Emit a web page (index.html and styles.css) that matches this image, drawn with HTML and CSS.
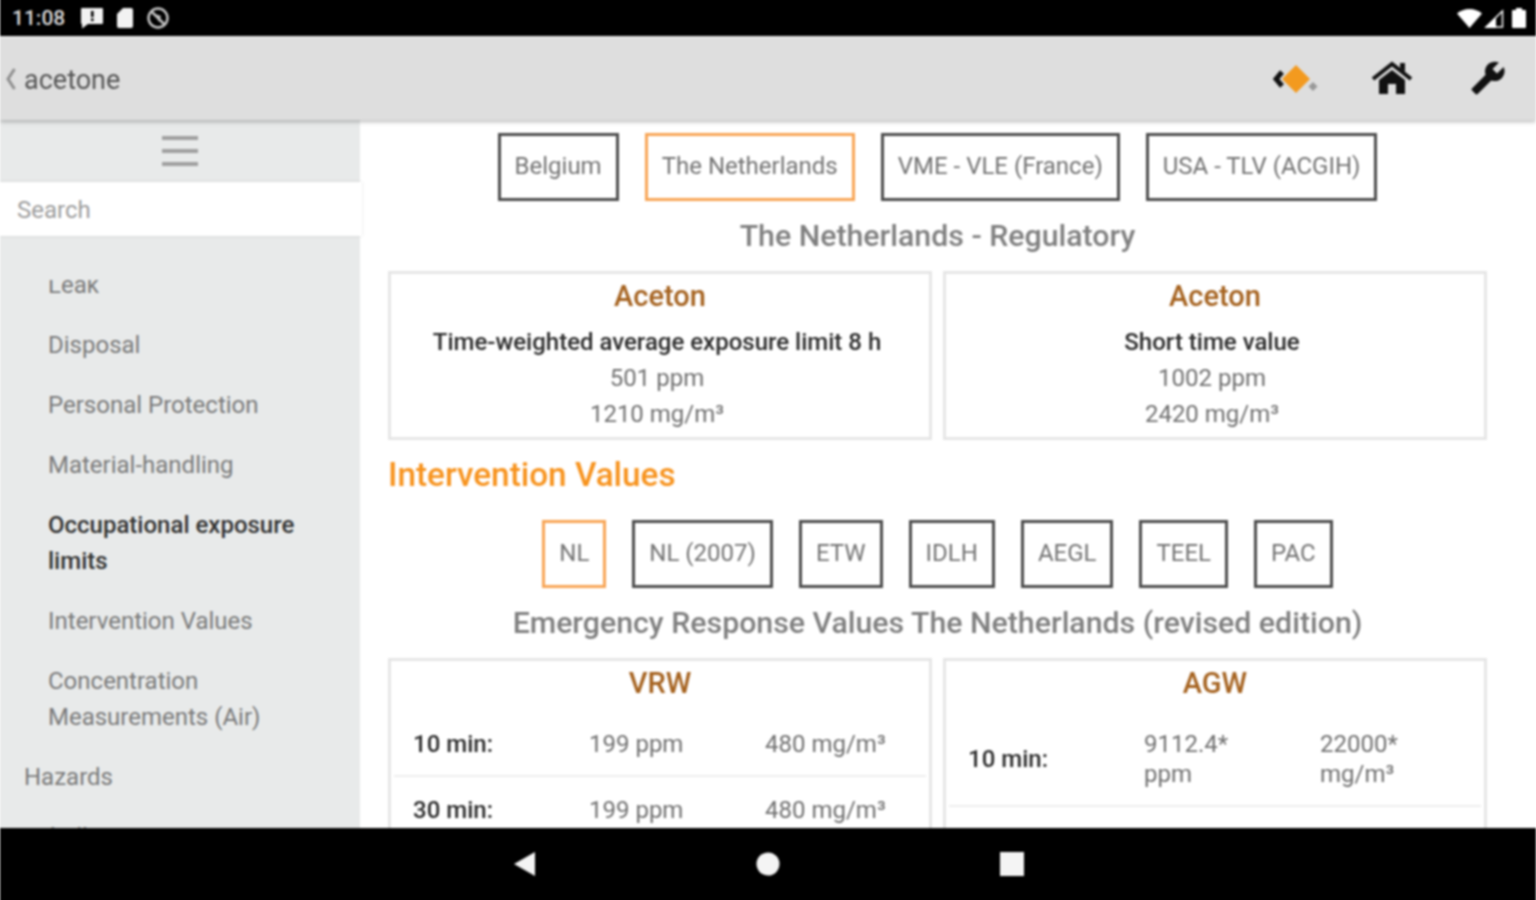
FILE: index.html
```html
<!DOCTYPE html>
<html lang="en">
<head>
    <meta charset="UTF-8">
    <meta name="viewport" content="width=device-width, initial-scale=1.0">
    <title>acetone</title>
    <link rel="stylesheet" href="styles.css">
</head>
<body>
    <div class="app">
        <div class="status-bar">
            <div class="status-left">
                <span class="time">11:08</span>
                <svg class="st-msg" width="24" height="22" viewBox="0 0 24 22"><path fill="#f2f2f2" d="M2 1h20a1 1 0 0 1 1 1v14a1 1 0 0 1-1 1H8l-6 4.500V17a1 1 0 0 1-1-1V2a1 1 0 0 1 1-1z"/><rect x="11" y="4" width="2.600" height="6" fill="#000"/><rect x="11" y="11.500" width="2.600" height="2.600" fill="#000"/></svg>
                <svg class="st-sd" width="16" height="20" viewBox="0 0 16 20"><path fill="#f2f2f2" d="M6 0h8a2 2 0 0 1 2 2v16a2 2 0 0 1-2 2H2a2 2 0 0 1-2-2V6z"/></svg>
                <svg class="st-sync" width="24" height="24" viewBox="0 0 24 24"><circle cx="12" cy="12" r="9.500" fill="none" stroke="#c4c4c4" stroke-width="2.500"/><path d="M5 5l14 14" stroke="#c4c4c4" stroke-width="2.500"/><path d="M9 8l6 2-2 6z" fill="#c4c4c4"/></svg>
            </div>
            <div class="status-right">
                <svg width="25" height="19" viewBox="0 0 25 19"><path fill="#fff" d="M12.500 19L0 4.500C3.500 1.700 7.800 0 12.500 0S21.500 1.700 25 4.500z"/></svg>
                <svg width="20" height="19" viewBox="0 0 20 19"><path fill="none" stroke="#fff" stroke-width="1.500" d="M2 18L18.500 2v16z"/><path fill="#fff" d="M1 19L12 8v11z"/></svg>
                <svg class="st-batt" width="14" height="20" viewBox="0 0 14 20"><path fill="#fff" d="M4 0h6v2h3a1 1 0 0 1 1 1v16a1 1 0 0 1-1 1H1a1 1 0 0 1-1-1V3a1 1 0 0 1 1-1h3z"/></svg>
            </div>
        </div>

        <header class="app-header">
            <div class="back">
                <svg width="10" height="24" viewBox="0 0 10 24"><path d="M8.500 2L2 12l6.500 10" fill="none" stroke="#8f8f8f" stroke-width="3"/></svg>
                <span class="back-title">acetone</span>
            </div>
            <div class="actions">
                <div class="action">
                    <svg class="logo" width="46" height="30" viewBox="0 0 46 30"><path d="M9 8L3 15l6 7" fill="none" stroke="#111" stroke-width="5"/><path fill="#f39a1f" d="M23 1l14 14-14 14L9 15z"/><path fill="#999" d="M40 18l4.500 4.500L40 27l-4.500-4.500z"/></svg>
                </div>
                <div class="action">
                    <svg width="42" height="34" viewBox="0 0 42 34"><path fill="none" stroke="#111" stroke-width="4" d="M2 18L21 3l19 15"/><path fill="#111" d="M29 2h5v9l-5-4z"/><path fill="#111" d="M21 9l13 10v14H25V23h-8v10H8V19z"/></svg>
                </div>
                <div class="action">
                    <svg width="36" height="36" viewBox="0 0 24 24"><path fill="#111" transform="matrix(-1 0 0 1 24 0)" d="M22.700 19l-9.100-9.100c.9-2.300.4-5-1.500-6.900-2-2-5-2.400-7.400-1.300L9 6 6 9 1.600 4.700C.4 7.100.9 10.100 2.900 12.100c1.900 1.900 4.600 2.400 6.900 1.500l9.100 9.100c.4.400 1 .4 1.400 0l2.300-2.300c.5-.4.500-1.100.1-1.400z"/></svg>
                </div>
            </div>
        </header>

        <div class="layout">
            <aside class="sidebar">
                <div class="hamburger">
                    <span></span><span></span><span></span>
                </div>
                <div class="search">Search</div>
                <div class="nav-clip">
                    <ul class="nav-list">
                        <li class="sub">Leak</li>
                        <li class="sub">Disposal</li>
                        <li class="sub">Personal Protection</li>
                        <li class="sub">Material-handling</li>
                        <li class="sub active">Occupational exposure limits</li>
                        <li class="sub">Intervention Values</li>
                        <li class="sub">Concentration Measurements (Air)</li>
                        <li>Hazards</li>
                        <li>Labelling</li>
                    </ul>
                </div>
            </aside>

            <main class="content">
                <div class="tabs">
                    <div class="tab">Belgium</div>
                    <div class="tab selected">The Netherlands</div>
                    <div class="tab">VME - VLE (France)</div>
                    <div class="tab">USA - TLV (ACGIH)</div>
                </div>
                <h2 class="sub-title">The Netherlands - Regulatory</h2>
                <div class="cards">
                    <div class="card">
                        <h3>Aceton</h3>
                        <p class="label">Time-weighted average exposure limit 8 h</p>
                        <p>501 ppm</p>
                        <p>1210 mg/m³</p>
                    </div>
                    <div class="card">
                        <h3>Aceton</h3>
                        <p class="label">Short time value</p>
                        <p>1002 ppm</p>
                        <p>2420 mg/m³</p>
                    </div>
                </div>

                <h2 class="section-title">Intervention Values</h2>
                <div class="tabs">
                    <div class="tab selected">NL</div>
                    <div class="tab">NL (2007)</div>
                    <div class="tab">ETW</div>
                    <div class="tab">IDLH</div>
                    <div class="tab">AEGL</div>
                    <div class="tab">TEEL</div>
                    <div class="tab">PAC</div>
                </div>
                <h2 class="sub-title">Emergency Response Values The Netherlands (revised edition)</h2>
                <div class="cards">
                    <div class="card">
                        <h3>VRW</h3>
                        <div class="row">
                            <span class="label">10 min:</span>
                            <span>199 ppm</span>
                            <span>480 mg/m³</span>
                        </div>
                        <div class="row">
                            <span class="label">30 min:</span>
                            <span>199 ppm</span>
                            <span>480 mg/m³</span>
                        </div>
                    </div>
                    <div class="card">
                        <h3>AGW</h3>
                        <div class="row">
                            <span class="label">10 min:</span>
                            <span>9112.4*<br>ppm</span>
                            <span>22000*<br>mg/m³</span>
                        </div>
                        <div class="row">
                            <span class="label">30 min:</span>
                            <span>9112.4*<br>ppm</span>
                            <span>22000*<br>mg/m³</span>
                        </div>
                    </div>
                </div>
            </main>
        </div>

        <div class="nav-bar">
            <svg width="24" height="26" viewBox="0 0 24 26"><path fill="#f4f4f4" d="M23 1v24L2 13z"/></svg>
            <svg width="24" height="24" viewBox="0 0 24 24"><circle cx="12" cy="12" r="11.500" fill="#f4f4f4"/></svg>
            <svg width="24" height="24" viewBox="0 0 24 24"><rect width="24" height="24" fill="#f4f4f4"/></svg>
        </div>
    </div>
</body>
</html>
```

FILE: styles.css
```css
* {
    box-sizing: border-box;
}

body {
    margin: 0;
    background-color: #fff;
    font-family: Roboto, "Liberation Sans", sans-serif;
    overflow: hidden;
}

.app {
    width: 1536px;
    height: 900px;
    display: flex;
    flex-direction: column;
    overflow: hidden;
    box-shadow: 0 -4px #000, 0 4px #000;
    filter: blur(0.8px);
}

/* status bar */
.status-bar {
    height: 36px;
    flex: none;
    background-color: #000;
    display: flex;
    justify-content: space-between;
    align-items: center;
    padding: 0 10px 0 12px;
}

.status-left,
.status-right {
    display: flex;
    align-items: center;
}

.time {
    color: #dcdcdc;
    font-size: 21px;
    font-weight: 500;
    width: 68px;
}

.st-sd {
    margin: 0 13px;
}

.status-right {
    gap: 2px;
}

.st-batt {
    margin-left: 6px;
}

/* header */
.app-header {
    height: 84px;
    flex: none;
    background-color: #dedede;
    border-top: 2px solid #e8e8e8;
    display: flex;
    justify-content: space-between;
    align-items: center;
    box-shadow: 0 2px 4px rgba(0, 0, 0, 0.25);
    position: relative;
    z-index: 2;
}

.back {
    display: flex;
    align-items: center;
    padding-left: 6px;
    gap: 8px;
}

.back-title {
    color: #555;
    font-size: 27px;
    padding-top: 1px;
}

.actions {
    display: flex;
}

.action {
    width: 96px;
    display: flex;
    justify-content: center;
    align-items: center;
    padding-bottom: 2px;
}

.logo {
    margin-top: 2px;
}

/* main layout */
.layout {
    flex: 1;
    display: flex;
    min-height: 0;
}

.sidebar {
    width: 360px;
    flex: none;
    background-color: #e8eaea;
    display: flex;
    flex-direction: column;
}

.hamburger {
    height: 62px;
    flex: none;
    display: flex;
    flex-direction: column;
    align-items: center;
    justify-content: center;
    gap: 9px;
}

.hamburger span {
    display: block;
    width: 36px;
    height: 4px;
    background-color: #a0a0a0;
}

.search {
    height: 54px;
    flex: none;
    width: 362px;
    padding: 1px 0 0 17px;
    background-color: #fff;
    color: #9c9c9c;
    font-size: 24px;
    line-height: 54px;
    box-shadow: 0 0 3px rgba(0, 0, 0, 0.12);
}

.nav-clip {
    flex: 1;
    margin-top: 44px;
    overflow: hidden;
}

.nav-list {
    list-style: none;
    margin: -25px 0 0;
    padding: 0;
}

.nav-list li {
    padding: 12px 48px 12px 24px;
    font-size: 24px;
    line-height: 36px;
    color: #7a7a7a;
}

.nav-list li.sub {
    padding-left: 48px;
}

.nav-list li.active {
    color: #333;
    font-weight: 500;
}

/* content */
.content {
    flex: 1;
    padding: 13px 49px 0 28px;
    overflow: hidden;
}

.tabs {
    display: flex;
    justify-content: center;
    gap: 26px;
}

.tab {
    height: 68px;
    padding: 0 14px 3px;
    border: 3px solid #4d4d4d;
    color: #737373;
    font-size: 24px;
    display: flex;
    align-items: center;
}

.tab.selected {
    border-color: #f8a555;
}

.sub-title {
    margin: 14px 0 14px;
    text-align: center;
    color: #7f7f7f;
    font-size: 30.3px;
    line-height: 42px;
    font-weight: 500;
}

.section-title {
    margin: 14px 0 24px;
    color: #f7931e;
    font-size: 33.3px;
    line-height: 42px;
    font-weight: 500;
}

.cards {
    display: grid;
    grid-template-columns: 544px 544px;
    gap: 11px;
}

.card {
    border: 3px solid #e6e6e6;
    padding: 0 3px 5px;
    text-align: center;
    font-size: 24px;
    line-height: 36px;
    color: #707070;
}

.card h3 {
    margin: 0 0 7px;
    padding-top: 1px;
    color: #a5621f;
    font-size: 29px;
    line-height: 42px;
    font-weight: 500;
}

.card p {
    margin: 0;
    padding-right: 6px;
}

.card .label {
    color: #2b2b2b;
    font-weight: 500;
}

.row {
    display: grid;
    grid-template-columns: 176px 176px 1fr;
    align-items: center;
    padding: 18px 0 16px 19px;
    text-align: left;
    line-height: 30px;
    border-bottom: 2px solid #eee;
}

/* android nav */
.nav-bar {
    height: 72px;
    flex: none;
    background-color: #000;
    display: flex;
    justify-content: center;
    align-items: center;
    gap: 220px;
}
```
